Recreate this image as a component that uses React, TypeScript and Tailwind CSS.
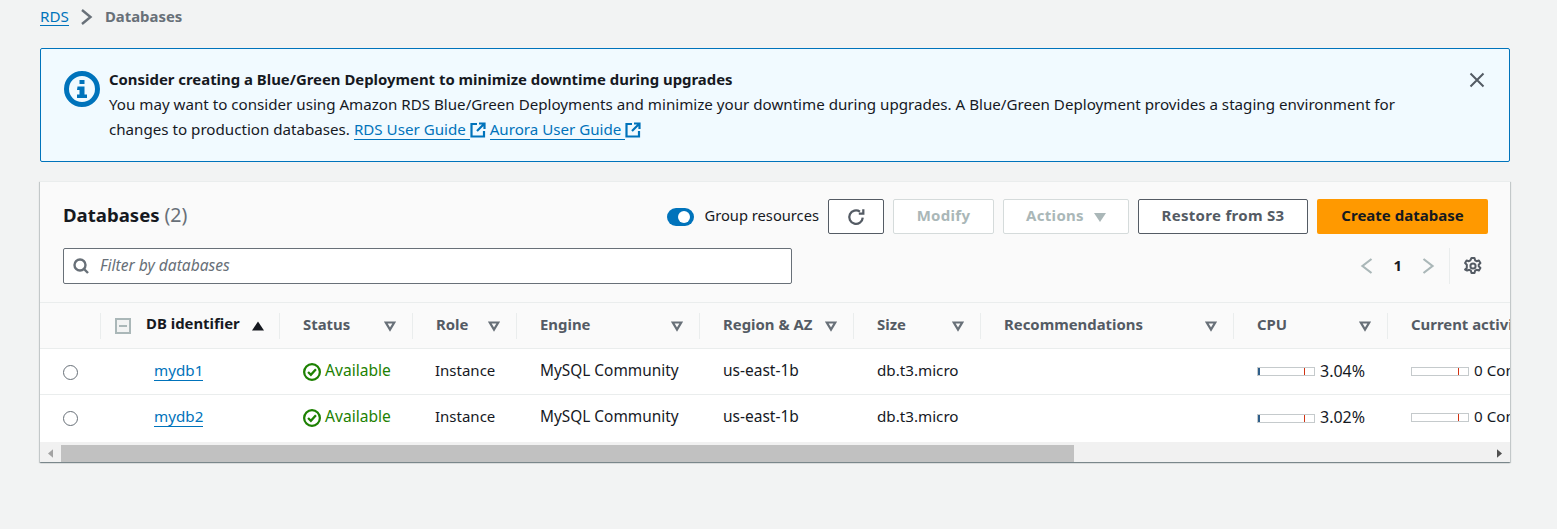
import React from "react";

const font = "font-['Noto_Sans',sans-serif]";

const columns = [
  { label: "Status", width: "w-[133px]" },
  { label: "Role", width: "w-[104px]" },
  { label: "Engine", width: "w-[183px]" },
  { label: "Region & AZ", width: "w-[154px]" },
  { label: "Size", width: "w-[127px]" },
  { label: "Recommendations", width: "w-[253px]" },
  { label: "CPU", width: "w-[154px]" },
];

const rows = [
  { name: "mydb1", cpu: "3.04%" },
  { name: "mydb2", cpu: "3.02%" },
];

function ExternalIcon() {
  return (
    <svg viewBox="0 0 16 16" className="inline-block w-4 h-4 align-[-3px]" fill="none" stroke="#0073bb" strokeWidth="2.2">
      <path d="M7 2H1.500v12.500H14V9" />
      <path d="M9 1.500h5.500V7M14 2 7 9" />
    </svg>
  );
}

function FilterCaret({ color = "#687078" }: { color?: string }) {
  return (
    <svg viewBox="0 0 12 12" className="w-3 h-3 shrink-0" fill="none" stroke={color} strokeWidth="2.2">
      <path d="M1.800 2.500h8.400L6 9.500z" />
    </svg>
  );
}

function Meter({ fill }: { fill: boolean }) {
  return (
    <div className="relative w-[58px] h-[9px] border border-[#c5cacc] bg-white shrink-0">
      {fill && <div className="absolute left-0 top-0 w-[2px] h-full bg-[#2f5f8a]" />}
      <div className="absolute left-[46px] top-0 w-px h-full bg-[#d13212]" />
    </div>
  );
}

export default function App() {
  return (
    <div className={`${font} min-h-[529px] bg-[#f2f3f3] text-[15.2px] text-[#16191f] px-10 overflow-hidden`}>
      <div className="flex items-center h-[34px] pb-px">
        <a className="text-[#0073bb] border-b border-[#0073bb] leading-[18px]">RDS</a>
        <svg viewBox="0 0 16 16" className="w-4 h-4 ml-[10px] mr-[10px]" fill="none" stroke="#687078" strokeWidth="2.400">
          <path d="M3 1 11.500 8 3 15" />
        </svg>
        <span className="font-bold text-[#687078] text-[14.9px]">Databases</span>
      </div>

      <div className="flex mt-[14px] h-[114px] w-[1470px] border border-[#0073bb] rounded-[2px] bg-[#f1faff] pl-[23px] pr-[24px] pt-[20px]">
        <svg viewBox="0 0 36 36" className="w-9 h-9 shrink-0 mt-[2px]" fill="none">
          <circle cx="18" cy="18" r="15.500" stroke="#0073bb" strokeWidth="5" />
          <rect x="15.500" y="9" width="5" height="4" fill="#0073bb" />
          <path d="M13.500 15.500h7v8h2.500v3.500h-10v-3.500h2.500v-4.500h-2.500z" fill="#0073bb" />
        </svg>
        <div className="ml-[9px] w-[1310px]">
          <div className="font-bold text-[14.9px] leading-[20px]">Consider creating a Blue/Green Deployment to minimize downtime during upgrades</div>
          <div className="text-[15.15px] leading-[25px] mt-[3px]">
            You may want to consider using Amazon RDS Blue/Green Deployments and minimize your downtime during upgrades. A Blue/Green Deployment provides a staging environment for
            <br />
            changes to production databases.{" "}
            <a className="text-[#0073bb] border-b border-[#0073bb]">RDS User Guide </a>
            <ExternalIcon />{" "}
            <a className="text-[#0073bb] border-b border-[#0073bb]">Aurora User Guide </a>
            <ExternalIcon />
          </div>
        </div>
        <svg viewBox="0 0 16 16" className="w-4 h-4 ml-auto mt-[3px]" fill="none" stroke="#545b64" strokeWidth="2">
          <path d="M1.500 1.500l13 13M14.500 1.500l-13 13" />
        </svg>
      </div>

      <div className="mt-[19px] w-[1470px] bg-white border-t border-[#eaeded] shadow-[0_1px_1px_0_rgba(0,28,36,0.3),1px_1px_1px_0_rgba(0,28,36,0.15),-1px_1px_1px_0_rgba(0,28,36,0.15)] overflow-hidden">
        <div className="bg-[#fafafa] border-b border-[#eaeded] h-[121px] pl-[23px] pr-[22px] pt-[17px]">
          <div className="flex items-center h-[35px]">
            <h1 className="text-[18.600px] font-bold leading-[22px] pb-[3px]">
              Databases <span className="font-normal text-[19.500px] text-[#687078]">(2)</span>
            </h1>
            <div className="ml-auto flex items-center">
              <span className="relative w-[27px] h-[18px] rounded-full bg-[#0073bb] mr-[11px]">
                <span className="absolute right-[4px] top-[3px] w-[12px] h-[12px] rounded-full bg-white" />
              </span>
              <span className="mr-[9px] text-[14.700px] pb-[2px]">Group resources</span>
              <button className="w-[56px] h-[35px] flex items-center justify-center border border-[#545b64] rounded-[2px] bg-white">
                <svg viewBox="0 0 16 16" className="w-[18px] h-[18px]" fill="none" stroke="#545b64" strokeWidth="2">
                  <path d="M14 8.500A6 6 0 1 1 11.500 3.200" />
                  <path d="M14.500 1v4h-4" />
                </svg>
              </button>
              <button className="ml-[9px] w-[101px] h-[35px] pb-[2px] border border-[#d5dbdb] rounded-[2px] bg-white font-bold text-[15px] tracking-[0.3px] text-[#aab7b8]">Modify</button>
              <button className="ml-[9px] w-[126px] h-[35px] flex items-center justify-center gap-[10px] border border-[#d5dbdb] rounded-[2px] bg-white font-bold text-[15px] tracking-[0.3px] text-[#aab7b8]">
                <span className="pb-[2px]">Actions</span>
                <svg viewBox="0 0 12 12" className="w-3 h-3"><path d="M0 2h12L6 11z" fill="#aab7b8" /></svg>
              </button>
              <button className="ml-[9px] w-[170px] h-[35px] pb-[2px] border border-[#545b64] rounded-[2px] bg-white font-bold text-[15px] tracking-[0.3px] text-[#545b64]">Restore from S3</button>
              <button className="ml-[9px] w-[171px] h-[35px] pb-[2px] rounded-[2px] bg-[#ff9900] font-bold text-[15px] text-[#16191f]">Create database</button>
            </div>
          </div>
          <div className="flex items-center mt-[14px] h-[36px]">
            <div className="flex items-center w-[729px] h-[36px] border border-[#687078] rounded-[2px] bg-white pl-[9px]">
              <svg viewBox="0 0 16 16" className="w-4 h-4" fill="none" stroke="#687078" strokeWidth="2.400">
                <circle cx="7" cy="7" r="5.500" />
                <path d="M11 11l4 4" />
              </svg>
              <span className="ml-[11px] italic text-[15.600px] text-[#687078]">Filter by databases</span>
            </div>
            <div className="ml-auto flex items-center h-[36px] pr-[6px]">
              <svg viewBox="0 0 16 16" className="w-4 h-[18px]" fill="none" stroke="#aab7b8" strokeWidth="2.200">
                <path d="M12.500 1 3.500 8l9 7" />
              </svg>
              <span className="mx-[18px] font-bold text-[14.900px] pb-px">1</span>
              <svg viewBox="0 0 16 16" className="w-4 h-[18px]" fill="none" stroke="#aab7b8" strokeWidth="2.200">
                <path d="M3.500 1 12.500 8l-9 7" />
              </svg>
              <div className="ml-[13px] w-px h-[36px] bg-[#eaeded]" />
              <svg viewBox="0 0 18 18" className="ml-[14px] w-[18px] h-[18px]" fill="none" stroke="#545b64" strokeWidth="2" strokeLinejoin="round">
                <circle cx="9" cy="9" r="2.600" />
                <path d="M7.500 1h3l.6 2.300 1.500.9 2.300-.7 1.500 2.600-1.700 1.600v1.600l1.700 1.600-1.500 2.600-2.300-.7-1.500.9-.6 2.300h-3l-.6-2.300-1.500-.9-2.300.7L1.100 12.500l1.700-1.600V9.100 7.700L1.100 6.100l1.500-2.600 2.300.7 1.500-.9z" />
              </svg>
            </div>
          </div>
        </div>

        <div className="overflow-hidden">
          <div className="flex w-[1700px] h-[46px] bg-[#fafafa] border-b border-[#eaeded] items-center">
            <div className="w-[61px] h-[26px] border-r border-[#eaeded] shrink-0" />
            <div className="w-[179px] h-[26px] shrink-0 flex items-center pl-[14px] border-r border-[#eaeded]">
              <span className="w-4 h-4 border-2 border-[#aab7b8] bg-[#f2f3f3] flex items-center justify-center shrink-0">
                <span className="w-[8px] h-[2px] bg-[#aab7b8]" />
              </span>
              <span className="ml-[15px] font-bold text-[14.900px] text-[#16191f] pb-[5px]">DB identifier</span>
              <svg viewBox="0 0 12 12" className="w-3 h-3 ml-[12px]"><path d="M0 10.500h12L6 1.500z" fill="#16191f" /></svg>
            </div>
            {columns.map((c) => (
              <div key={c.label} className={`${c.width} h-[26px] shrink-0 flex items-center justify-between pl-[23px] pr-[16px] border-r border-[#eaeded]`}>
                <span className="font-bold text-[14.900px] text-[#545b64] pb-[2px]">{c.label}</span>
                <FilterCaret />
              </div>
            ))}
            <div className="w-[300px] h-[26px] shrink-0 flex items-center pl-[23px]">
              <span className="font-bold text-[14.900px] text-[#545b64] pb-[2px]">Current activity</span>
            </div>
          </div>

          {rows.map((r, i) => (
            <div key={r.name} className={`flex w-[1700px] items-center bg-white ${i === 0 ? "h-[46px] border-b border-[#eaeded]" : "h-[47px] pb-px"}`}>
              <div className={`w-[61px] shrink-0 pl-[23px] ${i === 0 ? "pt-[2px]" : ""}`}>
                <span className="block w-[15px] h-[15px] rounded-full border border-[#687078]" />
              </div>
              <div className="w-[179px] shrink-0 pl-[53px] pb-[3px]">
                <a className="text-[#0073bb] border-b border-[#0073bb] leading-[18px]">{r.name}</a>
              </div>
              <div className="w-[133px] shrink-0 pl-[23px] flex items-center text-[#1d8102]">
                <svg viewBox="0 0 16 16" className="w-[18px] h-[18px] mr-[4px] mt-px" fill="none" stroke="#1d8102" strokeWidth="2">
                  <circle cx="8" cy="8" r="7" />
                  <path d="M4.500 8 7 10.500 11.500 5.500" />
                </svg>
                <span className="pb-[2px] text-[15.600px]">Available</span>
              </div>
              <div className="w-[104px] shrink-0 pl-[22px] pb-[3px] text-[15px]">Instance</div>
              <div className="w-[183px] shrink-0 pl-[23px] pb-[2px] text-[15.400px]">MySQL Community</div>
              <div className="w-[154px] shrink-0 pl-[23px] pb-[2px] text-[15.500px]">us-east-1b</div>
              <div className="w-[127px] shrink-0 pl-[23px] pb-[3px]">db.t3.micro</div>
              <div className="w-[253px] shrink-0" />
              <div className="w-[154px] shrink-0 pl-[23px] flex items-center gap-[5px]">
                <Meter fill />
                <span className="pb-[2px] text-[16px]">{r.cpu}</span>
              </div>
              <div className="w-[300px] shrink-0 pl-[23px] flex items-center gap-[5px]">
                <Meter fill={false} />
                <span className="pb-[3px]">0 Connections</span>
              </div>
            </div>
          ))}

          <div className="flex items-center h-[20px] bg-[#f1f1f1] pt-[2px]">
            <span className="w-[21px] shrink-0 flex justify-center">
              <svg viewBox="0 0 6 10" className="w-[5px] h-[9px]"><path d="M6 0v10L0 5z" fill="#a3a3a3" /></svg>
            </span>
            <div className="w-[1013px] h-[17px] bg-[#c1c1c1]" />
            <span className="ml-auto w-[21px] shrink-0 flex justify-center">
              <svg viewBox="0 0 6 10" className="w-[5px] h-[9px]"><path d="M0 0v10l6-5z" fill="#505050" /></svg>
            </span>
          </div>
        </div>
      </div>
    </div>
  );
}
